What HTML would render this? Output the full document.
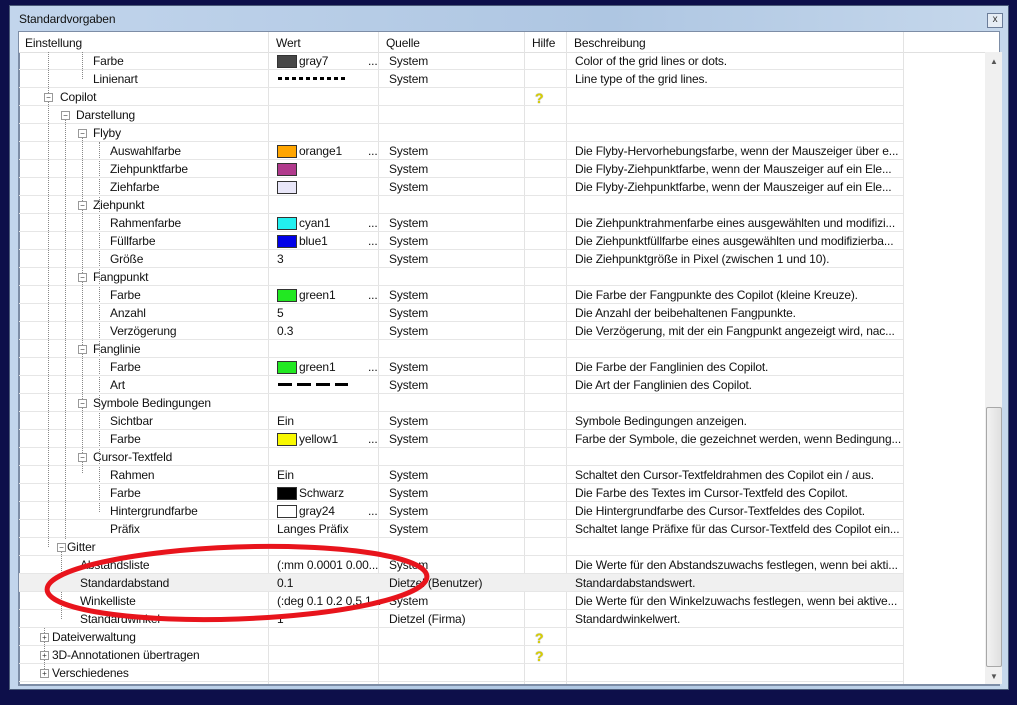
<!DOCTYPE html>
<html><head><meta charset="utf-8"><style>
body{margin:0;width:1017px;height:705px;background:#0d0f4a;overflow:hidden;position:relative;font-family:"Liberation Sans",sans-serif;font-size:12px;color:#111;letter-spacing:-0.15px}
.win{position:absolute;left:9px;top:5px;width:1000px;height:685px;background:linear-gradient(90deg,#c2d5ec,#aec6e2 60%,#c6d8ec);border:1px solid #4a5a78;box-sizing:border-box}
.title{position:absolute;left:9px;top:6px;font-size:12px}
.close{position:absolute;right:5px;top:7px;width:14px;height:13px;border:1px solid #6b7d99;background:#e6edf5;font-size:10px;line-height:12px;text-align:center;color:#333}
.panel{position:absolute;left:8px;top:25px;width:982px;height:655px;background:#fff;border:2px solid #7d8da6;box-sizing:border-box}
.hdr{position:absolute;left:19px;top:32px;width:980px;height:20px;background:#fff;border-bottom:1px solid #e0e0e0}
.h{position:absolute;top:4px}
.vl{position:absolute;top:32px;height:652px;width:1px;background:#e3e3e3}
.row{position:absolute;left:19px;width:884px;height:18px;border-bottom:1px solid #e6e6e6;box-sizing:border-box}
.row span{position:absolute;top:2px;white-space:nowrap}
.sw{position:absolute;top:3px;left:258px;width:18px;height:11px;border:1px solid #333}
.dots{position:absolute;left:349px;top:1px}
.box{position:absolute;top:5px;width:7px;height:7px;border:1px solid #999;background:#fff;font-size:8px;line-height:7px;text-align:center;color:#333;letter-spacing:0}
.q{position:absolute;left:516px;top:0px;color:#d8d000;font-weight:bold;font-size:14px;text-shadow:0 0 1px #666}
.sb{position:absolute;left:985px;top:52px;width:17px;height:632px;background:#f0f0f0}
.thumb{position:absolute;left:986px;top:407px;width:14px;height:258px;background:linear-gradient(90deg,#f2f2f2,#e0e0e0);border:1px solid #a8a8a8;border-radius:2px}
.tl{position:absolute;width:0;border-left:1px dotted #888}
</style></head><body>
<div class="win"><div class="title">Standardvorgaben</div><div class="close">x</div><div class="panel"></div></div>
<div class="hdr"><span class="h" style="left:6px">Einstellung</span><span class="h" style="left:257px">Wert</span><span class="h" style="left:367px">Quelle</span><span class="h" style="left:513px">Hilfe</span><span class="h" style="left:555px">Beschreibung</span></div>
<div class="vl" style="left:268px"></div><div class="vl" style="left:378px"></div><div class="vl" style="left:524px"></div><div class="vl" style="left:566px"></div><div class="vl" style="left:903px"></div>
<div class="sb"></div><div class="thumb"></div>
<div style="position:absolute;left:990px;top:57px;font-size:8px;color:#555">▲</div>
<div style="position:absolute;left:990px;top:672px;font-size:8px;color:#555">▼</div>
<div class="tl" style="left:48px;top:52px;height:495px"></div>
<div class="tl" style="left:65px;top:115px;height:424px"></div>
<div class="tl" style="left:82px;top:52px;height:27px"></div>
<div class="tl" style="left:82px;top:133px;height:340px"></div>
<div class="tl" style="left:99px;top:142px;height:370px"></div>
<div class="tl" style="left:61px;top:552px;height:67px"></div>
<div class="tl" style="left:44px;top:628px;height:45px"></div>

<div class="row" style="top:52px"><span style="left:74px">Farbe</span><div class="sw" style="background:#474747"></div><span style="left:280px">gray7</span><span class="dots">...</span><span style="left:370px">System</span><span style="left:556px">Color of the grid lines or dots.</span></div>
<div class="row" style="top:70px"><span style="left:74px">Linienart</span><div style="position:absolute;left:259px;top:7px;width:68px;height:3px;background:repeating-linear-gradient(90deg,#000 0 4px,transparent 4px 7px)"></div><span style="left:370px">System</span><span style="left:556px">Line type of the grid lines.</span></div>
<div class="row" style="top:88px"><div class="box" style="left:25px">−</div><span style="left:41px">Copilot</span><span class="q">?</span></div>
<div class="row" style="top:106px"><div class="box" style="left:42px">−</div><span style="left:57px">Darstellung</span></div>
<div class="row" style="top:124px"><div class="box" style="left:59px">−</div><span style="left:74px">Flyby</span></div>
<div class="row" style="top:142px"><span style="left:91px">Auswahlfarbe</span><div class="sw" style="background:#ffa500"></div><span style="left:280px">orange1</span><span class="dots">...</span><span style="left:370px">System</span><span style="left:556px">Die Flyby-Hervorhebungsfarbe, wenn der Mauszeiger über e...</span></div>
<div class="row" style="top:160px"><span style="left:91px">Ziehpunktfarbe</span><div class="sw" style="background:#b03a8c"></div><span style="left:370px">System</span><span style="left:556px">Die Flyby-Ziehpunktfarbe, wenn der Mauszeiger auf ein Ele...</span></div>
<div class="row" style="top:178px"><span style="left:91px">Ziehfarbe</span><div class="sw" style="background:#e8e6f8"></div><span style="left:370px">System</span><span style="left:556px">Die Flyby-Ziehpunktfarbe, wenn der Mauszeiger auf ein Ele...</span></div>
<div class="row" style="top:196px"><div class="box" style="left:59px">−</div><span style="left:74px">Ziehpunkt</span></div>
<div class="row" style="top:214px"><span style="left:91px">Rahmenfarbe</span><div class="sw" style="background:#22f0f0"></div><span style="left:280px">cyan1</span><span class="dots">...</span><span style="left:370px">System</span><span style="left:556px">Die Ziehpunktrahmenfarbe eines ausgewählten und modifizi...</span></div>
<div class="row" style="top:232px"><span style="left:91px">Füllfarbe</span><div class="sw" style="background:#0000e8"></div><span style="left:280px">blue1</span><span class="dots">...</span><span style="left:370px">System</span><span style="left:556px">Die Ziehpunktfüllfarbe eines ausgewählten und modifizierba...</span></div>
<div class="row" style="top:250px"><span style="left:91px">Größe</span><span style="left:258px">3</span><span style="left:370px">System</span><span style="left:556px">Die Ziehpunktgröße in Pixel (zwischen 1 und 10).</span></div>
<div class="row" style="top:268px"><div class="box" style="left:59px">−</div><span style="left:74px">Fangpunkt</span></div>
<div class="row" style="top:286px"><span style="left:91px">Farbe</span><div class="sw" style="background:#22e822"></div><span style="left:280px">green1</span><span class="dots">...</span><span style="left:370px">System</span><span style="left:556px">Die Farbe der Fangpunkte des Copilot (kleine Kreuze).</span></div>
<div class="row" style="top:304px"><span style="left:91px">Anzahl</span><span style="left:258px">5</span><span style="left:370px">System</span><span style="left:556px">Die Anzahl der beibehaltenen Fangpunkte.</span></div>
<div class="row" style="top:322px"><span style="left:91px">Verzögerung</span><span style="left:258px">0.3</span><span style="left:370px">System</span><span style="left:556px">Die Verzögerung, mit der ein Fangpunkt angezeigt wird, nac...</span></div>
<div class="row" style="top:340px"><div class="box" style="left:59px">−</div><span style="left:74px">Fanglinie</span></div>
<div class="row" style="top:358px"><span style="left:91px">Farbe</span><div class="sw" style="background:#22e822"></div><span style="left:280px">green1</span><span class="dots">...</span><span style="left:370px">System</span><span style="left:556px">Die Farbe der Fanglinien des Copilot.</span></div>
<div class="row" style="top:376px"><span style="left:91px">Art</span><div style="position:absolute;left:259px;top:7px;width:70px;height:3px;background:repeating-linear-gradient(90deg,#000 0 14px,transparent 14px 19px)"></div><span style="left:370px">System</span><span style="left:556px">Die Art der Fanglinien des Copilot.</span></div>
<div class="row" style="top:394px"><div class="box" style="left:59px">−</div><span style="left:74px">Symbole Bedingungen</span></div>
<div class="row" style="top:412px"><span style="left:91px">Sichtbar</span><span style="left:258px">Ein</span><span style="left:370px">System</span><span style="left:556px">Symbole Bedingungen anzeigen.</span></div>
<div class="row" style="top:430px"><span style="left:91px">Farbe</span><div class="sw" style="background:#f8f800"></div><span style="left:280px">yellow1</span><span class="dots">...</span><span style="left:370px">System</span><span style="left:556px">Farbe der Symbole, die gezeichnet werden, wenn Bedingung...</span></div>
<div class="row" style="top:448px"><div class="box" style="left:59px">−</div><span style="left:74px">Cursor-Textfeld</span></div>
<div class="row" style="top:466px"><span style="left:91px">Rahmen</span><span style="left:258px">Ein</span><span style="left:370px">System</span><span style="left:556px">Schaltet den Cursor-Textfeldrahmen des Copilot ein / aus.</span></div>
<div class="row" style="top:484px"><span style="left:91px">Farbe</span><div class="sw" style="background:#000"></div><span style="left:280px">Schwarz</span><span style="left:370px">System</span><span style="left:556px">Die Farbe des Textes im Cursor-Textfeld des Copilot.</span></div>
<div class="row" style="top:502px"><span style="left:91px">Hintergrundfarbe</span><div class="sw" style="background:#fff"></div><span style="left:280px">gray24</span><span class="dots">...</span><span style="left:370px">System</span><span style="left:556px">Die Hintergrundfarbe des Cursor-Textfeldes des Copilot.</span></div>
<div class="row" style="top:520px"><span style="left:91px">Präfix</span><span style="left:258px">Langes Präfix</span><span style="left:370px">System</span><span style="left:556px">Schaltet lange Präfixe für das Cursor-Textfeld des Copilot ein...</span></div>
<div class="row" style="top:538px"><div class="box" style="left:38px">−</div><span style="left:48px">Gitter</span></div>
<div class="row" style="top:556px"><span style="left:61px">Abstandsliste</span><span style="left:258px">(:mm 0.0001 0.00...</span><span style="left:370px">System</span><span style="left:556px">Die Werte für den Abstandszuwachs festlegen, wenn bei akti...</span></div>
<div class="row" style="top:574px;background:#f0f0f0"><span style="left:61px">Standardabstand</span><span style="left:258px">0.1</span><span style="left:370px">Dietzel (Benutzer)</span><span style="left:556px">Standardabstandswert.</span></div>
<div class="row" style="top:592px"><span style="left:61px">Winkelliste</span><span style="left:258px">(:deg 0.1 0.2 0.5 1...</span><span style="left:370px">System</span><span style="left:556px">Die Werte für den Winkelzuwachs festlegen, wenn bei aktive...</span></div>
<div class="row" style="top:610px"><span style="left:61px">Standardwinkel</span><span style="left:258px">1</span><span style="left:370px">Dietzel (Firma)</span><span style="left:556px">Standardwinkelwert.</span></div>
<div class="row" style="top:628px"><div class="box" style="left:21px">+</div><span style="left:33px">Dateiverwaltung</span><span class="q">?</span></div>
<div class="row" style="top:646px"><div class="box" style="left:21px">+</div><span style="left:33px">3D-Annotationen übertragen</span><span class="q">?</span></div>
<div class="row" style="top:664px"><div class="box" style="left:21px">+</div><span style="left:33px">Verschiedenes</span></div>
<svg style="position:absolute;left:0;top:0" width="1017" height="705"><ellipse cx="237" cy="583" rx="190" ry="36" transform="rotate(-2 237 583)" fill="none" stroke="#e8141c" stroke-width="5"/></svg>
</body></html>
